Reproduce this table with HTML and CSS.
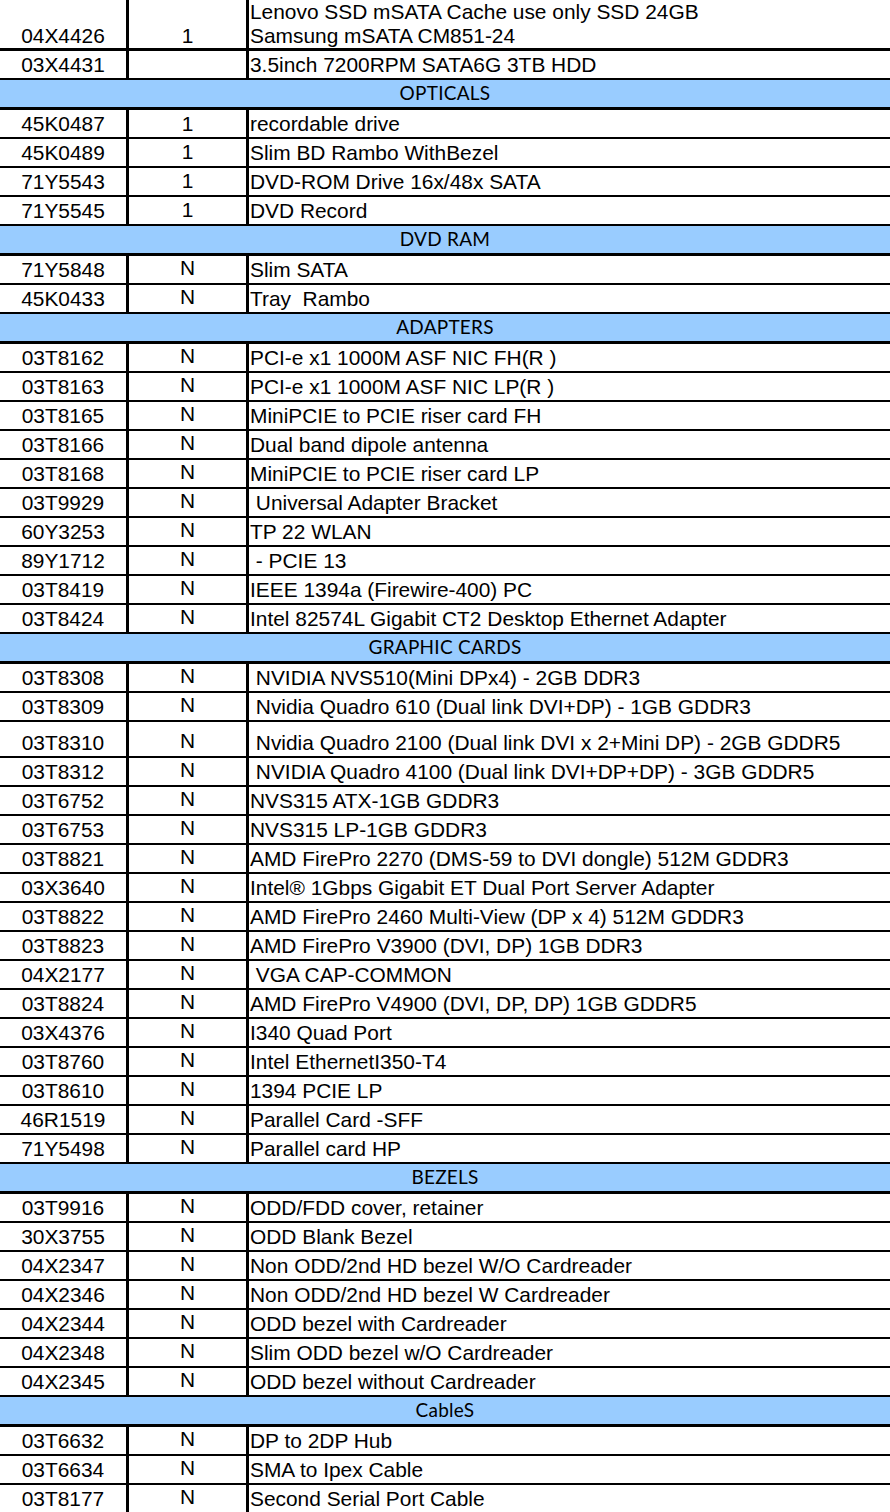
FILE: index.html
```html
<!DOCTYPE html>
<html>
<head>
<meta charset="utf-8">
<link rel="stylesheet" href="styles.css">
</head>
<body>
<table class="parts">
<colgroup><col class="c-pn"><col class="c-qty"><col class="c-desc"></colgroup>
<tbody>
<tr class="first"><td class="pn">04X4426</td><td class="qty">1</td><td class="desc two">Lenovo SSD mSATA Cache use only SSD 24GB<br>Samsung mSATA CM851-24</td></tr>
<tr><td class="pn">03X4431</td><td class="qty"></td><td class="desc">3.5inch 7200RPM SATA6G 3TB HDD</td></tr>
<tr class="sec"><td colspan="3">OPTICALS</td></tr>
<tr><td class="pn">45K0487</td><td class="qty">1</td><td class="desc">recordable drive</td></tr>
<tr><td class="pn">45K0489</td><td class="qty up">1</td><td class="desc">Slim BD Rambo WithBezel</td></tr>
<tr><td class="pn">71Y5543</td><td class="qty up">1</td><td class="desc">DVD-ROM Drive 16x/48x SATA</td></tr>
<tr><td class="pn">71Y5545</td><td class="qty up">1</td><td class="desc">DVD Record</td></tr>
<tr class="sec"><td colspan="3">DVD RAM</td></tr>
<tr><td class="pn">71Y5848</td><td class="qty n">N</td><td class="desc">Slim SATA</td></tr>
<tr><td class="pn">45K0433</td><td class="qty n">N</td><td class="desc">Tray  Rambo</td></tr>
<tr class="sec"><td colspan="3">ADAPTERS</td></tr>
<tr><td class="pn">03T8162</td><td class="qty n">N</td><td class="desc">PCI-e x1 1000M ASF NIC FH(R )</td></tr>
<tr><td class="pn">03T8163</td><td class="qty n">N</td><td class="desc">PCI-e x1 1000M ASF NIC LP(R )</td></tr>
<tr><td class="pn">03T8165</td><td class="qty n">N</td><td class="desc">MiniPCIE to PCIE riser card FH</td></tr>
<tr><td class="pn">03T8166</td><td class="qty n">N</td><td class="desc">Dual band dipole antenna</td></tr>
<tr><td class="pn">03T8168</td><td class="qty n">N</td><td class="desc">MiniPCIE to PCIE riser card LP</td></tr>
<tr><td class="pn">03T9929</td><td class="qty n">N</td><td class="desc"> Universal Adapter Bracket</td></tr>
<tr><td class="pn">60Y3253</td><td class="qty n">N</td><td class="desc">TP 22 WLAN</td></tr>
<tr><td class="pn">89Y1712</td><td class="qty n">N</td><td class="desc"> - PCIE 13</td></tr>
<tr><td class="pn">03T8419</td><td class="qty n">N</td><td class="desc">IEEE 1394a (Firewire-400) PC</td></tr>
<tr><td class="pn">03T8424</td><td class="qty n">N</td><td class="desc">Intel 82574L Gigabit CT2 Desktop Ethernet Adapter</td></tr>
<tr class="sec"><td colspan="3">GRAPHIC CARDS</td></tr>
<tr><td class="pn">03T8308</td><td class="qty n">N</td><td class="desc"> NVIDIA NVS510(Mini DPx4) - 2GB DDR3</td></tr>
<tr><td class="pn">03T8309</td><td class="qty n">N</td><td class="desc"> Nvidia Quadro 610 (Dual link DVI+DP) - 1GB GDDR3</td></tr>
<tr class="tall"><td class="pn">03T8310</td><td class="qty n">N</td><td class="desc"> Nvidia Quadro 2100 (Dual link DVI x 2+Mini DP) - 2GB GDDR5</td></tr>
<tr><td class="pn">03T8312</td><td class="qty n">N</td><td class="desc"> NVIDIA Quadro 4100 (Dual link DVI+DP+DP) - 3GB GDDR5</td></tr>
<tr><td class="pn">03T6752</td><td class="qty n">N</td><td class="desc">NVS315 ATX-1GB GDDR3</td></tr>
<tr><td class="pn">03T6753</td><td class="qty n">N</td><td class="desc">NVS315 LP-1GB GDDR3</td></tr>
<tr><td class="pn">03T8821</td><td class="qty n">N</td><td class="desc">AMD FirePro 2270 (DMS-59 to DVI dongle) 512M GDDR3</td></tr>
<tr><td class="pn">03X3640</td><td class="qty n">N</td><td class="desc">Intel® 1Gbps Gigabit ET Dual Port Server Adapter</td></tr>
<tr><td class="pn">03T8822</td><td class="qty n">N</td><td class="desc">AMD FirePro 2460 Multi-View (DP x 4) 512M GDDR3</td></tr>
<tr><td class="pn">03T8823</td><td class="qty n">N</td><td class="desc">AMD FirePro V3900 (DVI, DP) 1GB DDR3</td></tr>
<tr><td class="pn">04X2177</td><td class="qty n">N</td><td class="desc"> VGA CAP-COMMON</td></tr>
<tr><td class="pn">03T8824</td><td class="qty n">N</td><td class="desc">AMD FirePro V4900 (DVI, DP, DP) 1GB GDDR5</td></tr>
<tr><td class="pn">03X4376</td><td class="qty n">N</td><td class="desc">I340 Quad Port</td></tr>
<tr><td class="pn">03T8760</td><td class="qty n">N</td><td class="desc">Intel EthernetI350-T4</td></tr>
<tr><td class="pn">03T8610</td><td class="qty n">N</td><td class="desc">1394 PCIE LP</td></tr>
<tr><td class="pn">46R1519</td><td class="qty n">N</td><td class="desc">Parallel Card -SFF</td></tr>
<tr><td class="pn">71Y5498</td><td class="qty n">N</td><td class="desc">Parallel card HP</td></tr>
<tr class="sec"><td colspan="3">BEZELS</td></tr>
<tr><td class="pn">03T9916</td><td class="qty n">N</td><td class="desc">ODD/FDD cover, retainer</td></tr>
<tr><td class="pn">30X3755</td><td class="qty n">N</td><td class="desc">ODD Blank Bezel</td></tr>
<tr><td class="pn">04X2347</td><td class="qty n">N</td><td class="desc">Non ODD/2nd HD bezel W/O Cardreader</td></tr>
<tr><td class="pn">04X2346</td><td class="qty n">N</td><td class="desc">Non ODD/2nd HD bezel W Cardreader</td></tr>
<tr><td class="pn">04X2344</td><td class="qty n">N</td><td class="desc">ODD bezel with Cardreader</td></tr>
<tr><td class="pn">04X2348</td><td class="qty n">N</td><td class="desc">Slim ODD bezel w/O Cardreader</td></tr>
<tr><td class="pn">04X2345</td><td class="qty n">N</td><td class="desc">ODD bezel without Cardreader</td></tr>
<tr class="sec"><td colspan="3">CableS</td></tr>
<tr><td class="pn">03T6632</td><td class="qty n">N</td><td class="desc">DP to 2DP Hub</td></tr>
<tr><td class="pn">03T6634</td><td class="qty n">N</td><td class="desc">SMA to Ipex Cable</td></tr>
<tr><td class="pn">03T8177</td><td class="qty n">N</td><td class="desc">Second Serial Port Cable</td></tr>
</tbody>
</table>
</body>
</html>
```

FILE: styles.css
```css
html, body {
  margin: 0;
  padding: 0;
  background: #ffffff;
}

.parts {
  width: 890px;
  table-layout: fixed;
  border-collapse: separate;
  border-spacing: 0;
  font-family: "Liberation Sans", Arial, sans-serif;
  font-size: 20.9px;
  color: #000;
}

.c-pn { width: 129px; }
.c-qty { width: 120px; }
.c-desc { width: 641px; }

.parts td {
  box-sizing: border-box;
  height: 29px;
  padding: 0 0 2px 0;
  line-height: 23px;
  vertical-align: bottom;
  border-bottom: 2px solid #000;
  white-space: nowrap;
  overflow: hidden;
}

.parts td.pn,
.parts td.qty {
  border-right: 3px solid #000;
  text-align: center;
}

.parts td.qty.up { padding-bottom: 3px; }
.parts td.qty.n { padding-bottom: 4px; }

.parts td.desc {
  padding-left: 1px;
  white-space: pre;
}

.parts tr.first td {
  height: 51px;
  border-bottom-width: 3px;
  padding-bottom: 1px;
}

.parts td.desc.two {
  line-height: 24px;
  white-space: nowrap;
  padding-bottom: 0;
}

.parts tr.tall td { height: 36px; }

.parts tr.sec td {
  height: 30px;
  background: #99ccff;
  border-bottom-width: 3px;
  text-align: center;
  vertical-align: middle;
  padding: 0 0 2px 0;
  font-family: Lato, "Open Sans", sans-serif;
  font-size: 19px;
  letter-spacing: 0.25px;
  line-height: 22px;
}
```
